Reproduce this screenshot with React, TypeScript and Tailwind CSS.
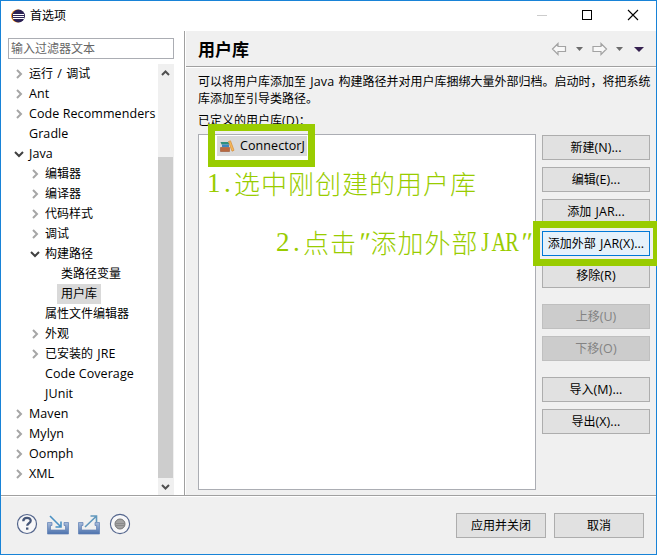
type Chevron = 'closed' | 'open' | 'none'

interface TreeRow {
  label: string
  level: 0 | 1 | 2
  state: Chevron
  selected?: boolean
}

const rows: TreeRow[] = [
  { label: '运行 / 调试', level: 0, state: 'closed' },
  { label: 'Ant', level: 0, state: 'closed' },
  { label: 'Code Recommenders', level: 0, state: 'closed' },
  { label: 'Gradle', level: 0, state: 'none' },
  { label: 'Java', level: 0, state: 'open' },
  { label: '编辑器', level: 1, state: 'closed' },
  { label: '编译器', level: 1, state: 'closed' },
  { label: '代码样式', level: 1, state: 'closed' },
  { label: '调试', level: 1, state: 'closed' },
  { label: '构建路径', level: 1, state: 'open' },
  { label: '类路径变量', level: 2, state: 'none' },
  { label: '用户库', level: 2, state: 'none', selected: true },
  { label: '属性文件编辑器', level: 1, state: 'none' },
  { label: '外观', level: 1, state: 'closed' },
  { label: '已安装的 JRE', level: 1, state: 'closed' },
  { label: 'Code Coverage', level: 1, state: 'none' },
  { label: 'JUnit', level: 1, state: 'none' },
  { label: 'Maven', level: 0, state: 'closed' },
  { label: 'Mylyn', level: 0, state: 'closed' },
  { label: 'Oomph', level: 0, state: 'closed' },
  { label: 'XML', level: 0, state: 'closed' },
]

const indent = { 0: 'pl-[12px]', 1: 'pl-[28px]', 2: 'pl-[44px]' }

// latin runs are a bit larger than the chinese ones around them
function Text({ children }: { children: string }) {
  return (
    <>
      {children.split(/([\x20-\x7e]+)/).map((part, i) =>
        i % 2 ? (
          <span key={i} className={`text-[12.5px] tracking-[0.08px] ${part.startsWith(' ') ? '[word-spacing:1px]' : ''}`}>
            {part}
          </span>
        ) : (
          part
        ),
      )}
    </>
  )
}

function TreeChevron({ state }: { state: Chevron }) {
  return (
    <svg className="h-[10px] w-[12px] shrink-0" viewBox="0 0 12 10" fill="none">
      {state === 'closed' && <path d="M4 1l4 4-4 4" stroke="#a6a6a6" strokeWidth="2" />}
      {state === 'open' && <path d="M2 3l4 4 4-4" stroke="#404040" strokeWidth="2" />}
    </svg>
  )
}

function Tree() {
  return (
    <div className="flex h-[431px]">
      <ul className="w-[157px] overflow-hidden">
        {rows.map((row) => (
          <li key={row.label} className={`flex h-5 items-center ${indent[row.level]}`}>
            <TreeChevron state={row.state} />
            <span className={`h-5 px-1 leading-5 whitespace-pre ${row.selected ? 'bg-[#d9d9d9]' : ''}`}>
              <Text>{row.label}</Text>
            </span>
          </li>
        ))}
      </ul>
      <div className="flex w-4 flex-col bg-[#f0f0f0]">
        <svg className="h-[17px] w-4" viewBox="0 0 16 17" fill="none" stroke="#505050" strokeWidth="2">
          <path d="M4 11l3.500-3.500 3.500 3.500" />
        </svg>
        <div className="h-[76px]" />
        <div className="mr-px flex-1 bg-[#cdcdcd]" />
        <svg className="h-[17px] w-4" viewBox="0 0 16 17" fill="none" stroke="#505050" strokeWidth="2">
          <path d="M4 7l3.500 3.500 3.500-3.500" />
        </svg>
      </div>
    </div>
  )
}

function Button({ children, className = '', disabled, focused }: { children: string; className?: string; disabled?: boolean; focused?: boolean }) {
  let look = 'border-[#adadad] bg-[#e1e1e1]'
  if (disabled) look = 'border-[#bfbfbf] bg-[#cccccc] text-[#838383]'
  if (focused) look = 'border-[#0078d7] bg-[#e5f1fb]'

  return (
    <button disabled={disabled} className={`flex h-[25px] shrink-0 items-center justify-center border whitespace-pre ${look} ${className}`}>
      <span>
        <Text>{children}</Text>
      </span>
    </button>
  )
}

function EclipseLogo() {
  return (
    <svg className="h-[14px] w-[14px]" viewBox="0 0 14 14">
      <circle cx="6.500" cy="7" r="6.500" fill="#f7941e" />
      <circle cx="7.500" cy="7" r="6.500" fill="#2c2255" />
      <path d="M2 5.500h11M2 7.500h11M2 9.500h11" stroke="#fff" strokeWidth="1" />
    </svg>
  )
}

function TitleBar() {
  return (
    <header className="flex h-[30px] shrink-0 items-center bg-white pl-[10px]">
      <EclipseLogo />
      <h1 className="mb-px ml-[5px] flex-1">首选项</h1>
      <svg className="h-[30px] w-[138px]" viewBox="0 0 138 30" fill="none" stroke="#000" shapeRendering="crispEdges">
        <path d="M19 14.500h10" stroke="#ccc" />
        <rect x="64.500" y="9.500" width="9" height="9" />
        <path d="M110 9l10 10M120 9l-10 10" shapeRendering="auto" strokeWidth="1.100" />
      </svg>
    </header>
  )
}

function HistoryIcons() {
  return (
    <svg className="h-[14px] w-[93px]" viewBox="0 0 93 14">
      <g fill="#f8f8f8" stroke="#a3a3a3" strokeWidth="1.200">
        <path d="M1.500 7l5.500-5.500v3h7.500v5H7v3z" />
        <path d="M55.500 7L50 1.500v3h-8v5h8v3z" />
      </g>
      <path d="M25 5h7l-3.500 4zM65 5h7l-3.500 4z" fill="#6d6d6d" />
      <path d="M83 5h10l-5 5z" fill="#35204f" />
    </svg>
  )
}

function BooksIcon() {
  return (
    <svg className="h-4 w-4 shrink-0" viewBox="0 0 16 16">
      <path d="M1.500 4h7.500l1 1v1.500H2.500z" fill="#2f8f7c" />
      <path d="M3 6.500h7V9H3z" fill="#3c86c0" />
      <path d="M1.500 9.500h9v4h-9z" fill="#b9683f" stroke="#9a5230" strokeWidth=".6" />
      <path d="M9.500 3.500l2-.7L15 12.300l-2 .9z" fill="#f6b95a" stroke="#d58a35" strokeWidth=".7" />
    </svg>
  )
}

function FooterIcons() {
  return (
    <svg className="mb-1 h-[22px] w-[116px]" viewBox="0 0 116 22" fill="none">
      <defs>
        <linearGradient id="tray" x1="0" y1="0" x2="0" y2="1">
          <stop offset="0" stopColor="#a9bddb" />
          <stop offset="1" stopColor="#4c72ad" />
        </linearGradient>
      </defs>
      <circle cx="11" cy="11" r="9.500" fill="#f7f7f8" stroke="#53658c" strokeWidth="1.200" />
      <path d="M7.300 8.200c0-4.400 7.400-4.400 7.400-.4 0 2.600-3.500 2.400-3.500 5" stroke="#465779" strokeWidth="2.300" />
      <path d="M10 14.500h2.400v2.200H10z" fill="#465779" />
      <g fill="url(#tray)" stroke="#5f80b4" strokeWidth=".7">
        <path d="M31.500 9.500h4.500v3h-1.500v4.500h15v-4.500H48v-3h4.500v11.500h-21z" />
        <path d="M62.500 9.500H67v3h-1.500v4.500h15v-4.500H79v-3h4.500v11.500h-21z" />
      </g>
      <path d="M34 3l10.500 10.500M45 8.500V14h-5.500" stroke="#4b91c3" strokeWidth="1.600" />
      <path d="M69 14L80 3.500M74.500 3h6v6" stroke="#6097bc" strokeWidth="1.600" />
      <circle cx="104" cy="11" r="9.600" fill="#f7f7f8" stroke="#53658c" strokeWidth="1.100" />
      <circle cx="104" cy="11" r="5" fill="#a3a3a3" stroke="#777" />
      <path d="M100 10.500h8M100 12.500h8" stroke="#8a8a8a" />
    </svg>
  )
}

// every chinese glyph fills one cell, latin ones take half a cell
function Note({ children, className }: { children: string; className: string }) {
  return (
    <p className={`absolute flex h-[30px] items-center font-['Liberation_Serif',serif] text-[27px] leading-[30px] font-light text-[#99cc00] ${className}`}>
      {[...children].map((ch, i) => {
        if (ch > '~') {
          return (
            <span key={i} className="w-[27px] font-['Noto_Sans_CJK_SC',sans-serif] text-[26px]">
              {ch}
            </span>
          )
        }
        const shape = /[A-Z]/.test(ch) ? 'scale-x-75' : ch === '"' ? 'skew-x-[-14deg]' : ''
        return (
          <span key={i} className="flex w-[13.5px] justify-center">
            <span className={shape}>{ch}</span>
          </span>
        )
      })}
    </p>
  )
}

function Separator() {
  return <div className="h-[2px] shrink-0 border-t border-[#a0a0a0] bg-white" />
}

export default function App() {
  return (
    <div className="relative h-[555px] w-[657px] overflow-hidden font-['Open_Sans','Noto_Sans_CJK_SC',sans-serif] text-[12px] leading-[17px] text-black">
      <div className="flex h-full flex-col border border-[#1883d7] bg-[#f0f0f0]">
        <TitleBar />
        <div className="flex h-[464px] shrink-0">
          <aside className="w-[183px] shrink-0 bg-white">
            <input className="mt-[7px] mb-[5px] ml-[7px] block h-[21px] w-[166px] border border-[#abadb3] px-[2px] placeholder:text-[#666]" placeholder="输入过滤器文本" />
            <Tree />
          </aside>
          <div className="w-[2px] shrink-0 border-l border-[#a0a0a0] bg-white" />
          <main className="flex min-w-0 flex-1 flex-col">
            <div className="flex h-[35px] items-center justify-between pr-[12px] pl-3">
              <h2 className="mt-px text-[17px] font-bold">用户库</h2>
              <HistoryIcons />
            </div>
            <Separator />
            <div className="h-[66px] pt-[5px] pl-3 whitespace-pre">
              <p>
                <Text>可以将用户库添加至 Java 构建路径并对用户库捆绑大量外部归档。启动时，将把系统</Text>
              </p>
              <p>库添加至引导类路径。</p>
              <p className="mt-[5px]">
                <Text>已定义的用户库(D)：</Text>
              </p>
            </div>
            <div className="flex pl-3">
              <div className="h-[356px] w-[338px] border border-[#abadb3] bg-white pt-px pl-[18px]">
                <div className="flex h-5 w-[90px] items-center bg-[#d9d9d9] pl-[2px]">
                  <BooksIcon />
                  <span className="mb-px ml-[5px]">
                    <Text>ConnectorJ</Text>
                  </span>
                </div>
              </div>
              <div className="ml-[6px] flex w-[108px] flex-col gap-[7px] pt-px">
                <Button>新建(N)...</Button>
                <Button>编辑(E)...</Button>
                <Button>添加 JAR...</Button>
                <Button focused>添加外部 JAR(X)...</Button>
                <Button>移除(R)</Button>
                <Button disabled className="mt-[9px]">上移(U)</Button>
                <Button disabled>下移(O)</Button>
                <Button className="mt-[9px]">导入(M)...</Button>
                <Button>导出(X)...</Button>
              </div>
            </div>
          </main>
        </div>
        <Separator />
        <footer className="flex flex-1 items-center pr-[12px] pl-[15px]">
          <FooterIcons />
          <div className="mb-[1px] ml-auto flex gap-2">
            <Button className="w-[90px]">应用并关闭</Button>
            <Button className="w-[90px]">取消</Button>
          </div>
        </footer>
      </div>

      <div className="absolute top-[124px] left-[208px] h-[43px] w-[107px] border-[7px] border-[#99cc00]" />
      <div className="absolute top-[221px] left-[533px] h-[45px] w-[127px] border-[7px] border-[#99cc00]" />
      <Note className="top-[168px] left-[207px]">1.选中刚创建的用户库</Note>
      <Note className="top-[227px] left-[276px]">2.点击"添加外部JAR"</Note>
    </div>
  )
}
